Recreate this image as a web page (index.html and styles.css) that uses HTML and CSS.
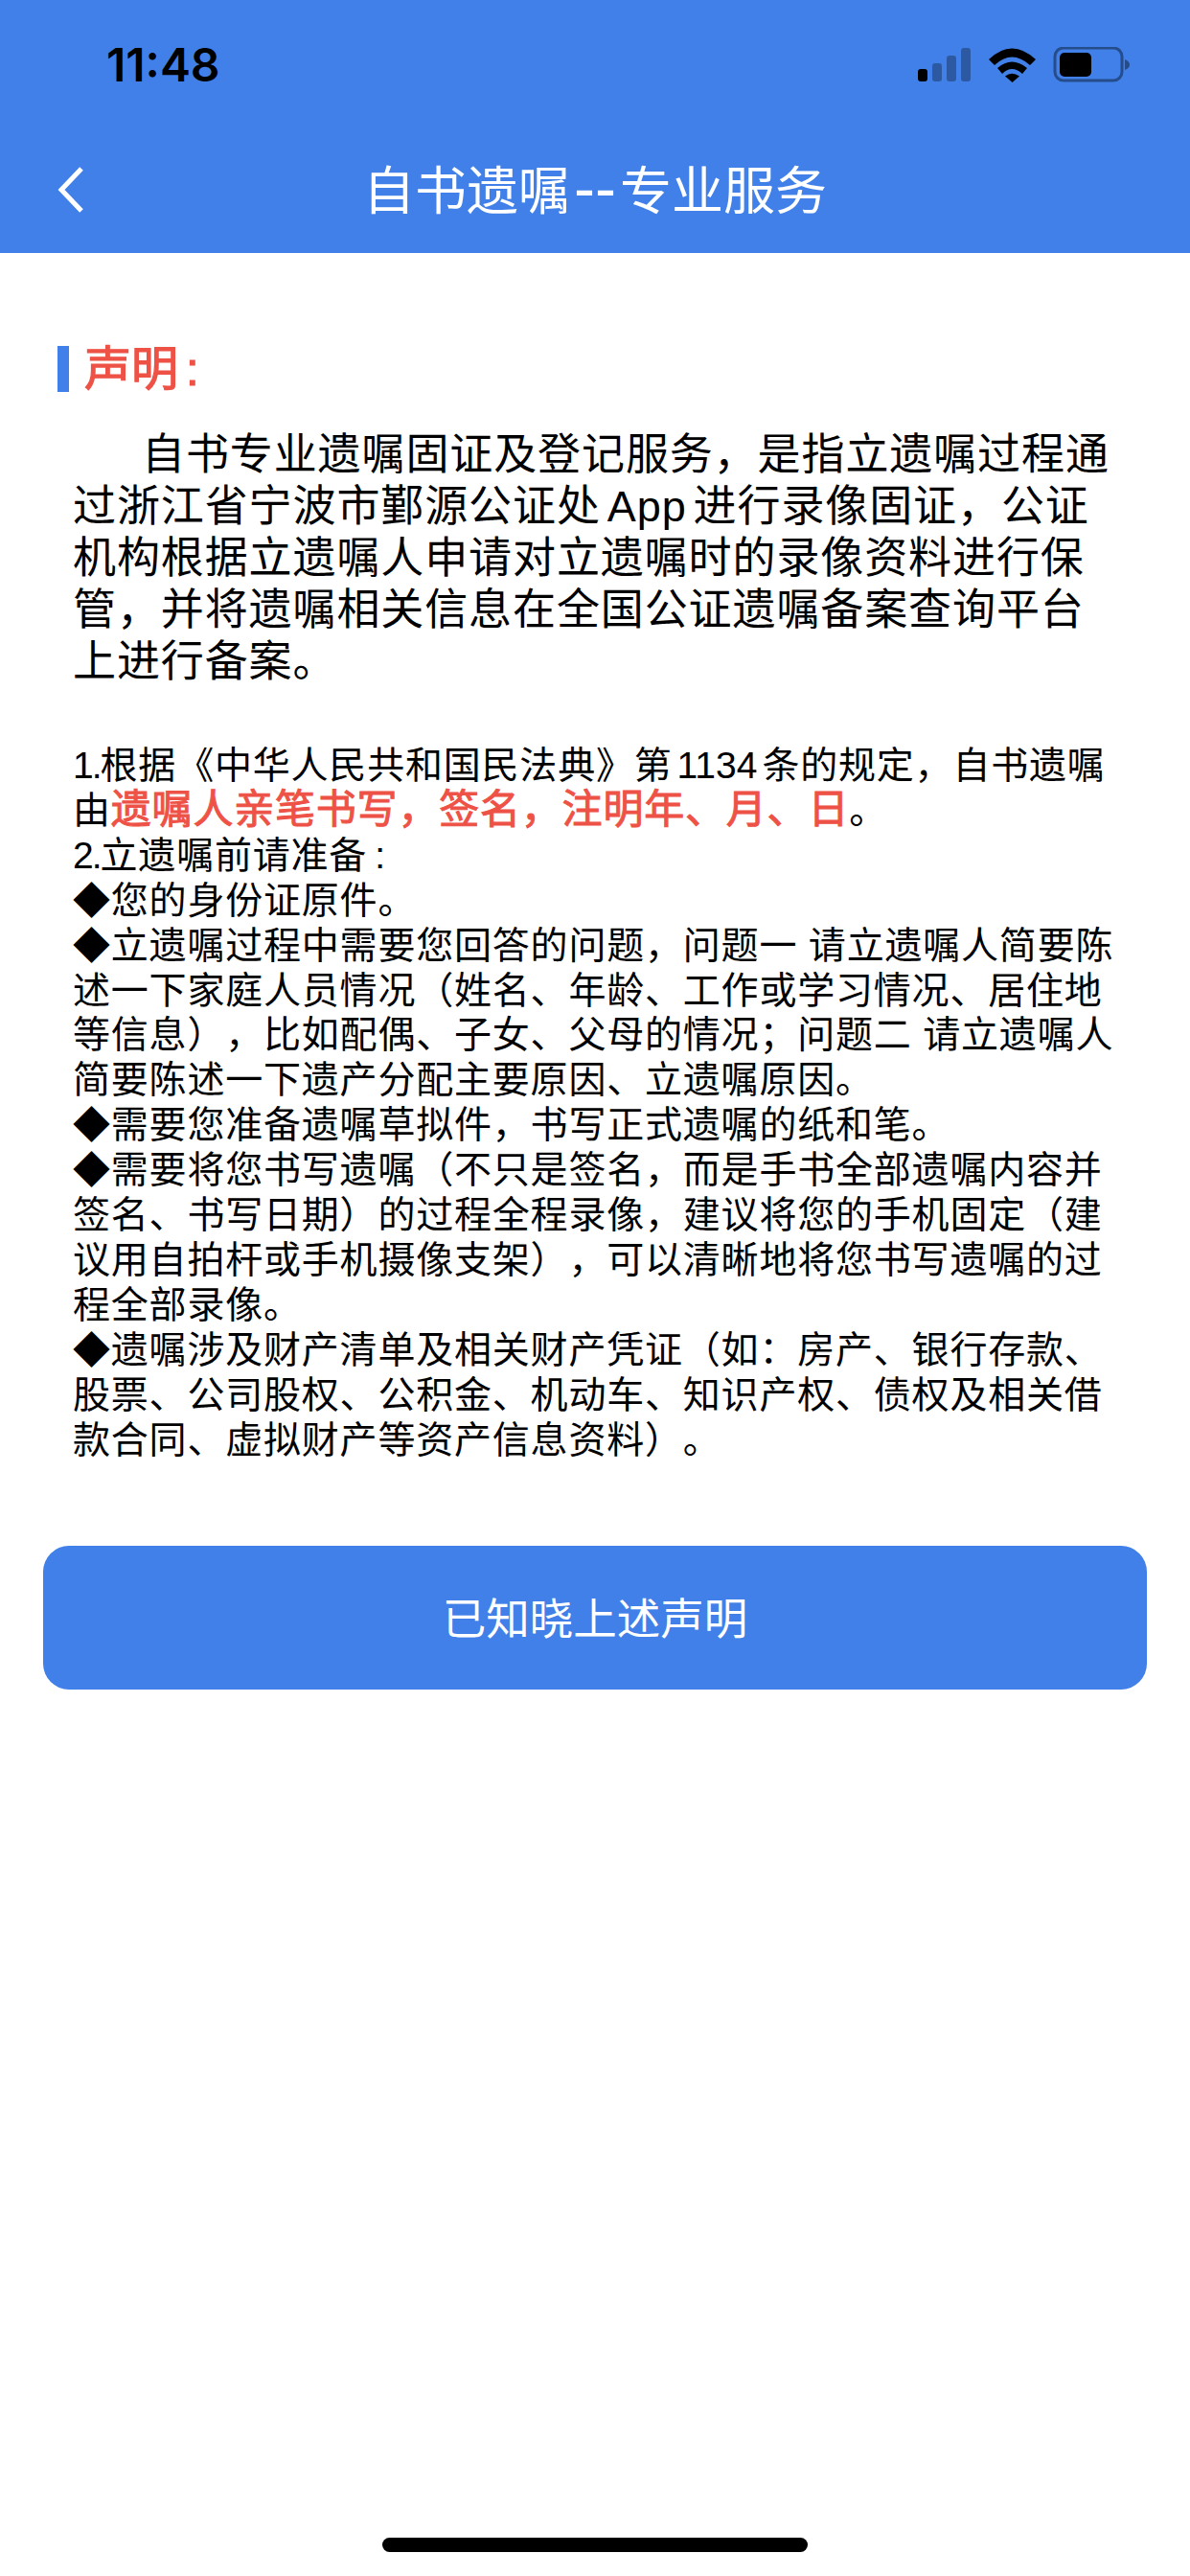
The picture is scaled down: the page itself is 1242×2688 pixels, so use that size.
FILE: index.html
```html
<!DOCTYPE html>
<html lang="zh-CN">
  <head>
    <title>自书遗嘱--专业服务</title>
    <link rel="stylesheet" href="styles.css">
  </head>
  <body>
    <div class="top">
      <!-- Status Bar -->
      <div class="status-bar">
        <span class="time">11:48</span>
        <svg class="status-icons" width="221" height="37" viewBox="0 0 221 37">
          <rect x="0" y="23" width="10" height="13" rx="3"/>
          <rect x="15" y="17" width="10" height="19" rx="3" opacity=".3"/>
          <rect x="30" y="9" width="10" height="27" rx="3" opacity=".3"/>
          <rect x="45" y="1" width="10" height="35" rx="3" opacity=".3"/>
          <path d="M74 13 Q98 -10 123 13 L117 19 Q98 2 80 19Z"/>
          <path d="M83 22 Q98 9 114 22 L109 28 Q98 18 88 28Z"/>
          <path d="M91 30.500 Q98 25 106 30.500 L98.500 37Z"/>
          <rect x="143" y="1" width="70" height="34" rx="9" fill="none" stroke="#000" stroke-width="3" opacity=".4"/>
          <rect x="148" y="6" width="33" height="25" rx="5"/>
          <path d="M216 13 Q221 15 221 18.500 Q221 22 216 24Z" opacity=".4"/>
        </svg>
      </div>

      <!-- Nav Bar -->
      <div class="nav-bar">
        <svg class="back" width="32" height="50" viewBox="0 0 32 50">
          <path d="M27 3 L6 25 L27 47" fill="none" stroke="#fff" stroke-width="5"/>
        </svg>
        <h1>自书遗嘱<span class="dashes">--</span>专业服务</h1>
      </div>
    </div>

    <div class="content">
      <h2 class="heading">声明<span class="colon">:</span></h2>

      <p class="intro">
        <span class="first">自书专业遗嘱固证及登记服务，是指立遗嘱过程通</span><br>
        过浙江省宁波市鄞源公证处<span class="latin">App</span>进行录像固证，公证<br>
        机构根据立遗嘱人申请对立遗嘱时的录像资料进行保<br>
        管，并将遗嘱相关信息在全国公证遗嘱备案查询平台<br>
        上进行备案。
      </p>

      <p class="notes">
        <span class="num">1.</span>根据《中华人民共和国民法典》第<span class="latin">1134</span>条的规定，自书遗嘱<br>
        由<span class="red">遗嘱人亲笔书写，签名，注明年、月、日</span>。<br>
        <span class="num">2.</span>立遗嘱前请准备<span class="colon">:</span><br>
        ◆您的身份证原件。<br>
        ◆立遗嘱过程中需要您回答的问题，问题一 请立遗嘱人简要陈<br>
        述一下家庭人员情况（姓名、年龄、工作或学习情况、居住地<br>
        等信息），比如配偶、子女、父母的情况；问题二 请立遗嘱人<br>
        简要陈述一下遗产分配主要原因、立遗嘱原因。<br>
        ◆需要您准备遗嘱草拟件，书写正式遗嘱的纸和笔。<br>
        ◆需要将您书写遗嘱（不只是签名，而是手书全部遗嘱内容并<br>
        签名、书写日期）的过程全程录像，建议将您的手机固定（建<br>
        议用自拍杆或手机摄像支架），可以清晰地将您书写遗嘱的过<br>
        程全部录像。<br>
        ◆遗嘱涉及财产清单及相关财产凭证（如：房产、银行存款、<br>
        股票、公司股权、公积金、机动车、知识产权、债权及相关借<br>
        款合同、虚拟财产等资产信息资料）。
      </p>

      <button class="confirm">已知晓上述声明</button>
    </div>

    <div class="home-indicator"></div>
  </body>
</html>
```

FILE: styles.css
```css
body {
  margin: 0;
  width: 1242px;
  height: 2688px;
  display: flex;
  flex-direction: column;
  background-color: #fff;
  color: #000;
  font-family: "Liberation Sans", "Noto Sans CJK SC", sans-serif;
  text-spacing-trim: space-all;
  overflow: hidden;
}

.top {
  height: 264px;
  background-color: #4080e8;
}

/* Status Bar */
.status-bar {
  height: 132px;
  padding: 0 63px 0 111px;
  display: flex;
  justify-content: space-between;
  align-items: flex-start;
}

.time {
  margin-top: 41px;
  font-family: Inter, sans-serif;
  font-size: 48px;
  line-height: 54px;
  font-weight: 600;
}

.status-icons {
  margin-top: 49px;
}

/* Nav Bar */
.nav-bar {
  position: relative;
  height: 132px;
  display: flex;
  align-items: center;
  justify-content: center;
}

.nav-bar h1 {
  margin: -2px 0 0;
  font-size: 54px;
  font-weight: 400;
  line-height: 64px;
  color: #fff;
}

.dashes {
  font-size: 66px;
  line-height: 1;
  margin: 0 4px;
}

.back {
  position: absolute;
  left: 58px;
  top: 41px;
}

/* Content */
.content {
  padding: 97px 45px 0;
}

.heading {
  margin: 0 0 0 15px;
  padding-left: 16px;
  border-left: 12px solid #4080e8;
  height: 48px;
  font-size: 49px;
  line-height: 48px;
  font-weight: 400;
  -webkit-text-stroke: 1.200px #ee5246;
  color: #ee5246;
}

.colon {
  margin-left: 8px;
}

.intro {
  margin: 39px 0 0 31px;
  font-size: 45px;
  line-height: 54px;
  letter-spacing: 0.900px;
  white-space: nowrap;
}

.first {
  margin-left: 72px;
}

.latin {
  margin: 0 7px;
}

.notes {
  margin: 58px 0 0 31px;
  font-size: 39px;
  line-height: 46.900px;
  letter-spacing: 0.800px;
  white-space: nowrap;
}

.notes .latin {
  margin: 0 5px;
  letter-spacing: 0;
}

.num {
  letter-spacing: -2px;
}

.red {
  color: #ee5246;
  font-size: 42px;
  line-height: 1;
  -webkit-text-stroke: 1px #ee5246;
}

.confirm {
  display: block;
  width: 100%;
  height: 150px;
  margin-top: 86px;
  padding-bottom: 4px;
  border: none;
  border-radius: 27px;
  background-color: #4080e8;
  color: #fff;
  font-family: inherit;
  font-size: 45.500px;
  font-weight: 400;
}

.home-indicator {
  width: 444px;
  height: 15px;
  margin: auto auto 25px;
  border-radius: 8px;
  background-color: #000;
}
```
